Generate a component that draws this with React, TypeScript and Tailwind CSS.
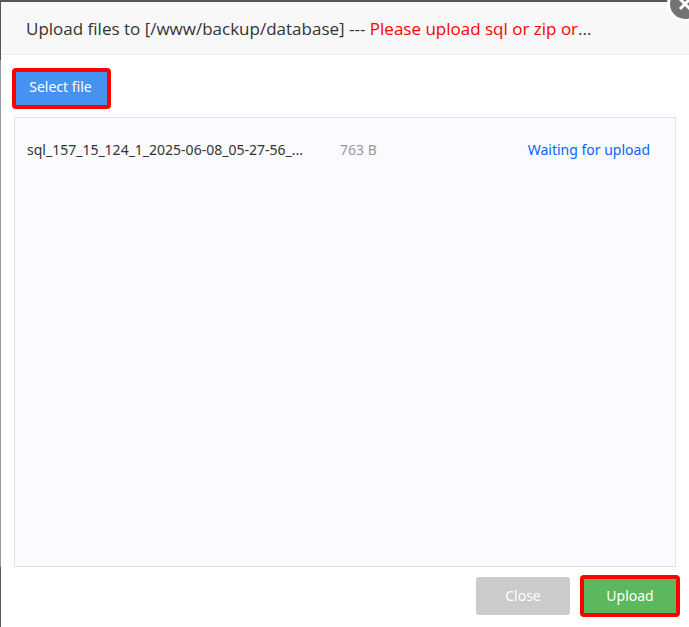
const files = [
  {
    name: 'sql_157_15_124_1_2025-06-08_05-27-56_...',
    size: '763 B',
    status: 'Waiting for upload',
  },
];

function CloseIcon() {
  return (
    <svg width="36" height="36" viewBox="0 0 36 36" aria-hidden="true">
      <circle cx="18" cy="18" r="18" fill="#fff" />
      <circle cx="18" cy="18" r="15" fill="#737373" />
      <path d="M13 13l10 10M23 13L13 23" stroke="#fff" strokeWidth="3" />
    </svg>
  );
}

export default function App() {
  return (
    <div className="flex min-h-screen overflow-hidden bg-[#575555] pt-0.5 font-['Noto_Sans',sans-serif] text-[#333]">
      <div className="w-px border-t-[58px] border-b-[60px] border-[#575555] bg-[#999]" />
      <section role="dialog" aria-labelledby="dialog-title" className="relative flex min-w-0 flex-1 flex-col bg-white">
        <header className="border-b border-[#eee] bg-[#f8f8f8] pt-0.5 pr-20 pl-[25px]">
          <h1 id="dialog-title" className="truncate font-['Open_Sans',sans-serif] text-[17px] leading-[50px]">
            Upload files to [/www/backup/database] --- <span className="text-[#f00]">Please upload sql or zip or</span>...
          </h1>
        </header>
        <button type="button" aria-label="Close dialog" className="absolute -top-4 -right-3.5">
          <CloseIcon />
        </button>

        <main className="flex flex-1 flex-col px-[13px] pt-[13px] pb-2.5">
          <button
            type="button"
            className="-ml-0.5 h-[41px] w-[99px] self-start rounded-sm border-4 border-[#f00] bg-[#4592f0] pr-0.5 pb-1 text-sm text-white"
          >
            Select file
          </button>

          <ul className="mt-2 flex-1 border border-[#e2e3e8] bg-[#fafbff] px-3 py-4">
            {files.map((file) => (
              <li key={file.name} className="flex text-sm leading-8">
                <span className="w-[313px] whitespace-nowrap">{file.name}</span>
                <span className="flex-1 text-[#999]">{file.size}</span>
                <span className="pr-[13px] text-[#0864ff]">{file.status}</span>
              </li>
            ))}
          </ul>

          <footer className="-mr-1 mt-2 flex items-center justify-end gap-2.5">
            <button type="button" className="h-[38px] w-[94px] rounded-[3px] bg-[#cbcbcb] text-sm text-white">
              Close
            </button>
            <button
              type="button"
              className="h-[42px] w-[100px] rounded-sm border-4 border-[#f00] bg-[#5cb85c] text-sm text-white"
            >
              Upload
            </button>
          </footer>
        </main>
      </section>
    </div>
  );
}
